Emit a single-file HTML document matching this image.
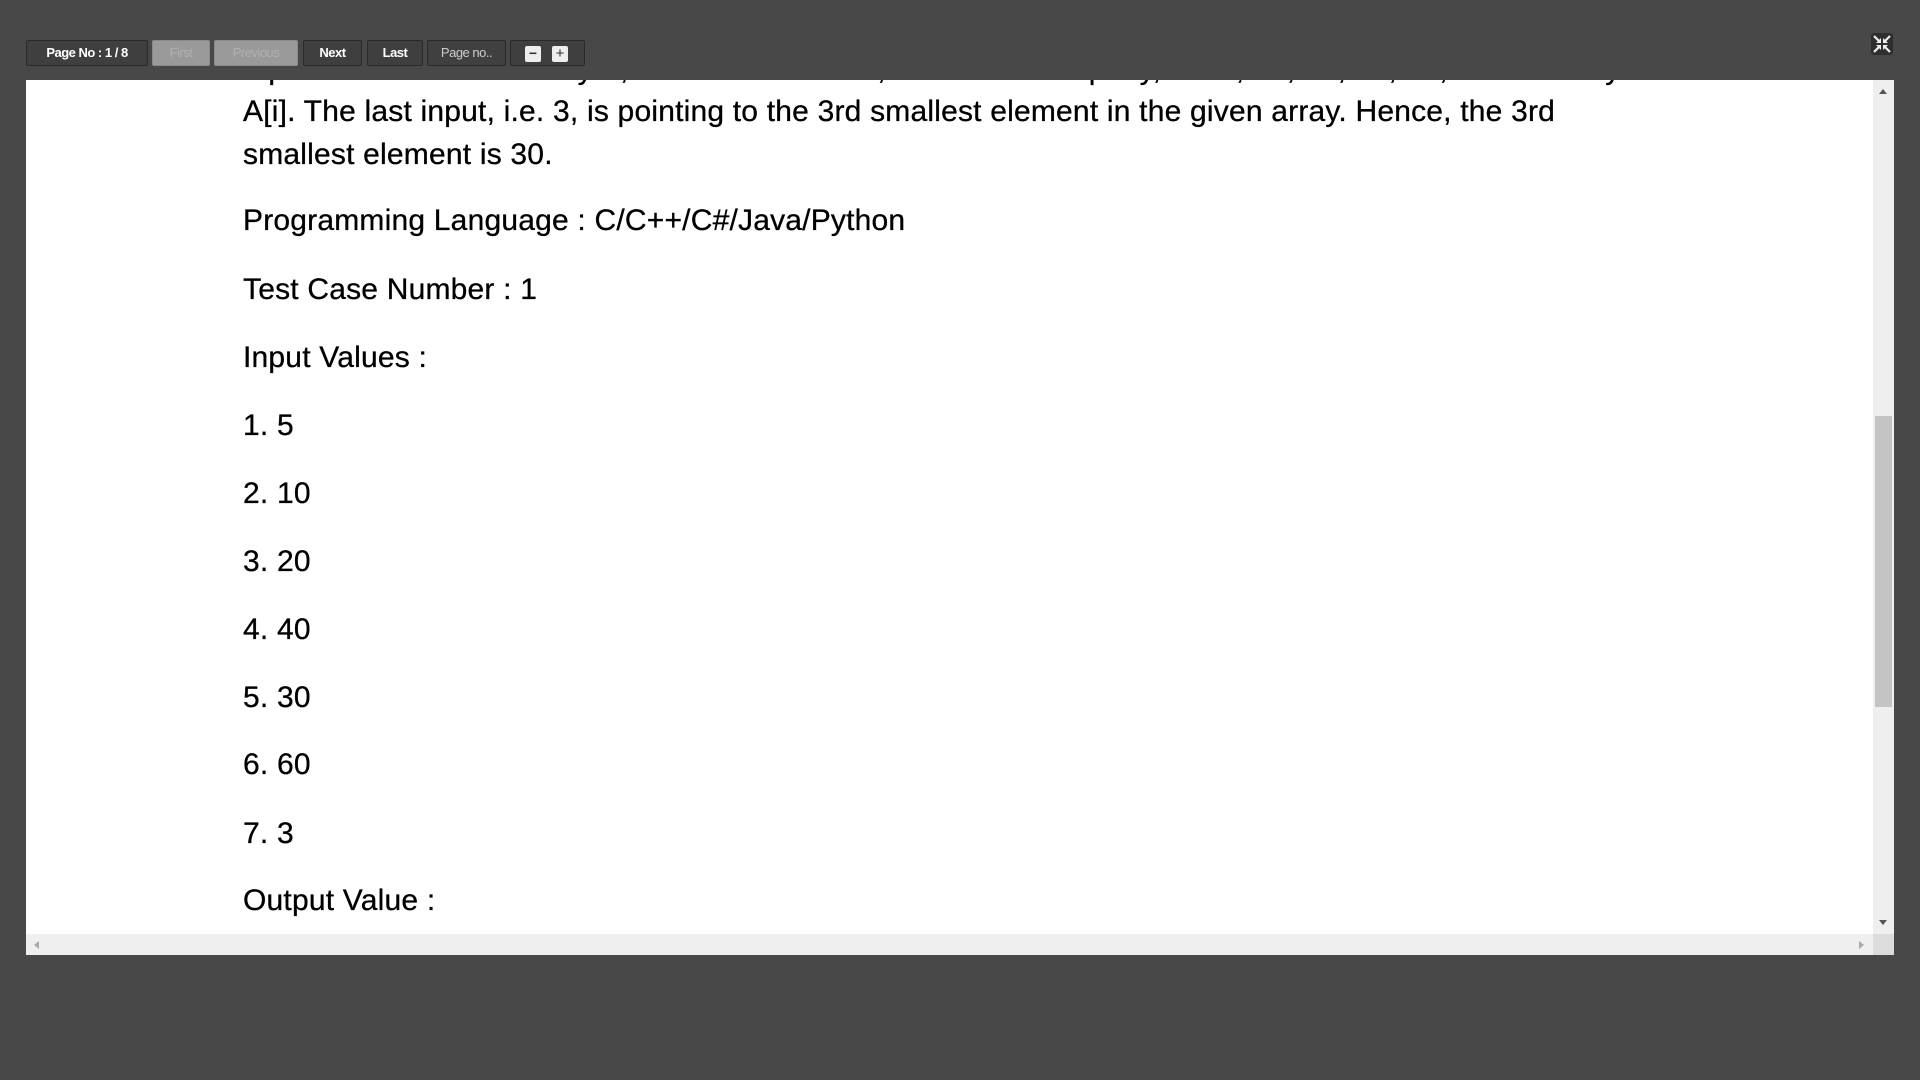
<!DOCTYPE html>
<html><head><meta charset="utf-8"><style>
body{margin:0;width:1920px;height:1080px;background:#484848;overflow:hidden;font-family:"Liberation Sans",sans-serif;position:relative}
.btn{position:absolute;top:40px;height:26px;box-sizing:border-box;border:1px solid #2a2a2a;border-radius:2px;background:#3f3f3f;color:#fff;font-size:13px;font-weight:bold;line-height:24px;text-align:center;letter-spacing:-0.5px}
.dis{background:#9a9a9a;color:#b0b0b0;border-color:#8a8a8a;font-weight:normal}
.doc{position:absolute;left:26px;top:80px;width:1847px;height:854px;background:#fff;overflow:hidden}
.t{position:absolute;left:217px;font-size:30px;color:#000;white-space:nowrap;line-height:34px;letter-spacing:0.2px;-webkit-text-stroke:0.3px #000}
.vs{position:absolute;left:1873px;top:80px;width:21px;height:854px;background:#efefef}
.hs{position:absolute;left:26px;top:934px;width:1847px;height:21px;background:#efefef}
.corner{position:absolute;left:1873px;top:934px;width:21px;height:21px;background:#dcdcdc}
</style></head><body>
<div class="btn" style="left:26px;width:122px">Page No : 1 / 8</div>
<div class="btn dis" style="left:152px;width:58px">First</div>
<div class="btn dis" style="left:214px;width:84px">Previous</div>
<div class="btn" style="left:303px;width:59px">Next</div>
<div class="btn" style="left:367px;width:56px">Last</div>
<div class="btn" style="left:427px;width:79px;font-weight:normal;color:#ccc;background:#404040">Page no..</div>
<div class="btn" style="left:510px;width:75px"></div>
<div style="position:absolute;left:525px;top:46px;width:16px;height:16px;background:#eee;border-radius:2px;color:#333;font-size:14px;line-height:15px;text-align:center;font-weight:bold">−</div>
<div style="position:absolute;left:552px;top:46px;width:16px;height:16px;background:#eee;border-radius:2px;color:#333;font-size:15px;line-height:15px;text-align:center">+</div>
<svg style="position:absolute;left:1871px;top:33px" width="22" height="22" viewBox="0 0 22 22"><rect x="0" y="0" width="22" height="22" rx="3" fill="#2e2e2e"/><g stroke="#eee" stroke-width="2.2" fill="none"><path d="M3 3l6 6M19 3l-6 6M3 19l6-6M19 19l-6-6"/></g><g fill="#eee"><path d="M10 10H5l5-5z"/><path d="M12 10h5l-5-5z"/><path d="M10 12H5l5 5z"/><path d="M12 12h5l-5 5z"/></g></svg>
<div class="doc">
<div class="t" style="top:-27px">Input Values are the Array A, count of elements, K-th smallest query, i.e. 5, 10, 20, 40, 30, 60 are array</div>
<div class="t" style="top:15px">A[i]. The last input, i.e. 3, is pointing to the 3rd smallest element in the given array. Hence, the 3rd</div>
<div class="t" style="top:58px">smallest element is 30.</div>
<div class="t" style="top:124px">Programming Language : C/C++/C#/Java/Python</div>
<div class="t" style="top:193px">Test Case Number : 1</div>
<div class="t" style="top:261px">Input Values :</div>
<div class="t" style="top:329px">1. 5</div>
<div class="t" style="top:397px">2. 10</div>
<div class="t" style="top:465px">3. 20</div>
<div class="t" style="top:533px">4. 40</div>
<div class="t" style="top:601px">5. 30</div>
<div class="t" style="top:668px">6. 60</div>
<div class="t" style="top:737px">7. 3</div>
<div class="t" style="top:804px">Output Value :</div>
</div>
<div class="vs"><div style="position:absolute;left:2px;top:336px;width:17px;height:291px;background:#c4c4c4"></div>
<div style="position:absolute;left:6px;top:9px;border:4px solid transparent;border-bottom:5px solid #555;border-top:0"></div>
<div style="position:absolute;left:6px;top:840px;border:4px solid transparent;border-top:5px solid #555;border-bottom:0"></div></div>
<div class="hs"><div style="position:absolute;left:8px;top:7px;border:4px solid transparent;border-right:5px solid #aaa;border-left:0"></div>
<div style="position:absolute;left:1833px;top:7px;border:4px solid transparent;border-left:5px solid #aaa;border-right:0"></div></div>
<div class="corner"></div>
</body></html>
